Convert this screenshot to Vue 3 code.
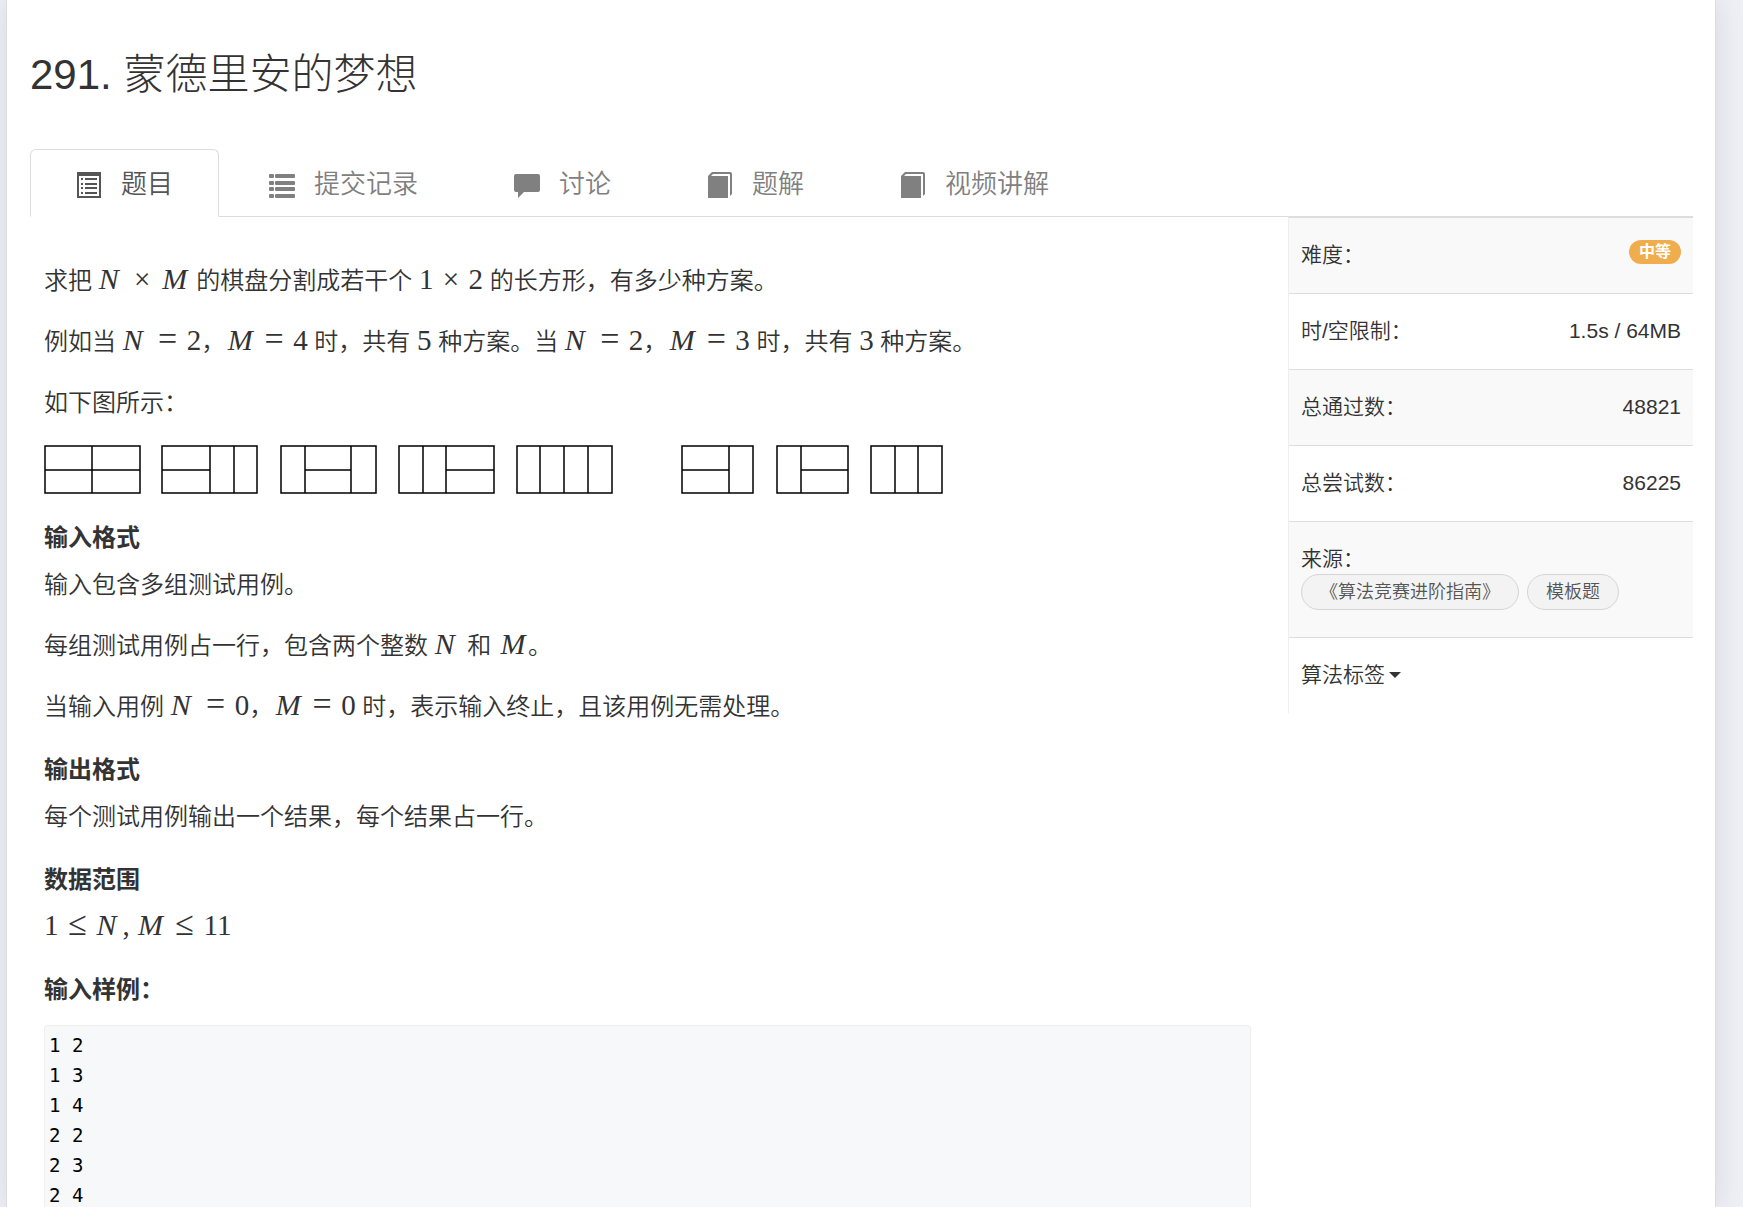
<script setup>
const tabs = [
  { label: '题目', icon: 'listAlt', active: true },
  { label: '提交记录', icon: 'list' },
  { label: '讨论', icon: 'comment' },
  { label: '题解', icon: 'book' },
  { label: '视频讲解', icon: 'book' },
]

const stats = [
  { label: '时/空限制：', value: '1.5s / 64MB' },
  { label: '总通过数：', value: '48821' },
  { label: '总尝试数：', value: '86225' },
]

const tags = ['《算法竞赛进阶指南》', '模板题']

const sample = ['1 2', '1 3', '1 4', '2 2', '2 3', '2 4'].join('\n')

// Each board: left edge, width, and the inner dividing lines
const boards = [
  { x: 1, w: 95, d: 'M48 1V48M1 25H96' },
  { x: 118, w: 95, d: 'M166 1V48M190 1V48M118 25H166' },
  { x: 237, w: 95, d: 'M261 1V48M307 1V48M261 25H307' },
  { x: 355, w: 95, d: 'M379 1V48M402 1V48M402 25H450' },
  { x: 473, w: 95, d: 'M496 1V48M520 1V48M544 1V48' },
  { x: 638, w: 71, d: 'M685 1V48M638 25H685' },
  { x: 733, w: 71, d: 'M757 1V48M757 25H804' },
  { x: 827, w: 71, d: 'M851 1V48M874 1V48' },
]
</script>

<template>
  <main class="card">
    <h1 class="title">291. 蒙德里安的梦想</h1>

    <nav class="tabs">
      <a v-for="tab in tabs" :key="tab.label" href="#" class="tab" :class="{ active: tab.active }">
        <svg class="icon" viewBox="0 0 26 30" aria-hidden="true">
          <path
            v-if="tab.icon === 'listAlt'"
            fill-rule="evenodd"
            d="M1 2H25V28H1ZM3 6V26H23V6ZM5 8H7V10H5ZM9 8H21V10H9ZM5 13H7V15H5ZM9 13H21V15H9ZM5 17H7V19H5ZM9 17H21V19H9ZM5 22H7V24H5ZM9 22H21V24H9Z"
          />
          <g v-else-if="tab.icon === 'list'">
            <template v-for="y in [4, 11, 17, 24]" :key="y">
              <rect x="0" :y="y" width="5" height="4" rx="1" />
              <rect x="6" :y="y" width="20" height="4" rx="1" />
            </template>
          </g>
          <path
            v-else-if="tab.icon === 'comment'"
            d="M2 4H24Q26 4 26 6V20Q26 22 24 22H10L4 28V22H2Q0 22 0 20V6Q0 4 2 4Z"
          />
          <path
            v-else
            d="M5 2H23Q25 2 25 4V24L23 26V4H6L4 6H21V28H1V6Z"
          />
        </svg>
        <span>{{ tab.label }}</span>
      </a>
    </nav>

    <div class="columns">
      <article class="content">
        <p>求把 <span class="math"><i class="n">N</i><span class="times">×</span><i class="m">M</i></span> 的棋盘分割成若干个 <span class="math">1<span class="times">×</span>2</span> 的长方形，有多少种方案。</p>
        <p>例如当 <span class="math"><i class="n">N</i><span class="rel">=</span>2</span>，<span class="math"><i class="m">M</i><span class="rel">=</span>4</span> 时，共有 <span class="math">5</span> 种方案。当 <span class="math"><i class="n">N</i><span class="rel">=</span>2</span>，<span class="math"><i class="m">M</i><span class="rel">=</span>3</span> 时，共有 <span class="math">3</span> 种方案。</p>
        <p>如下图所示：</p>
        <svg class="boards" viewBox="0 0 900 48" role="img" aria-label="棋盘分割方案">
          <g v-for="b in boards" :key="b.x">
            <rect :x="b.x" y="1" :width="b.w" height="47" />
            <path :d="b.d" />
          </g>
        </svg>

        <h2>输入格式</h2>
        <p>输入包含多组测试用例。</p>
        <p>每组测试用例占一行，包含两个整数 <span class="math"><i class="n">N</i></span> 和 <span class="math"><i class="m">M</i></span>。</p>
        <p>当输入用例 <span class="math"><i class="n">N</i><span class="rel">=</span>0</span>，<span class="math"><i class="m">M</i><span class="rel">=</span>0</span> 时，表示输入终止，且该用例无需处理。</p>

        <h2>输出格式</h2>
        <p>每个测试用例输出一个结果，每个结果占一行。</p>

        <h2>数据范围</h2>
        <p><span class="math">1<span class="rel">≤</span><i class="n">N</i><span class="comma">,</span><i class="m">M</i><span class="rel">≤</span>11</span></p>

        <h2>输入样例：</h2>
        <pre><code>{{ sample }}</code></pre>
      </article>

      <aside class="side">
        <table>
          <tbody>
            <tr>
              <th scope="row">难度：</th>
              <td><span class="badge">中等</span></td>
            </tr>
            <tr v-for="s in stats" :key="s.label">
              <th scope="row">{{ s.label }}</th>
              <td>{{ s.value }}</td>
            </tr>
            <tr>
              <td colspan="2" class="wide">
                <div>来源：</div>
                <div class="tags">
                  <a v-for="t in tags" :key="t" href="#" class="tag">{{ t }}</a>
                </div>
              </td>
            </tr>
            <tr>
              <td colspan="2" class="wide">
                <button type="button" class="toggle">算法标签<span class="caret"></span></button>
              </td>
            </tr>
          </tbody>
        </table>
      </aside>
    </div>
  </main>
</template>

<style>
body {
  margin: 0;
  background: #eff0f5;
}
</style>

<style scoped>
.card {
  box-sizing: border-box;
  margin: 0 27px 0 6px;
  padding: 48px 22px 0 23px;
  min-height: 100vh;
  background: #fff;
  border: solid #ddd;
  border-width: 0 1px;
  box-shadow: 0 0 30px rgba(0, 0, 0, 0.1);
  color: #333;
  font-family: 'Liberation Sans', 'Noto Sans CJK SC', sans-serif;
  font-size: 24px;
  font-weight: 350;
}

.title {
  margin: 0;
  font-size: 42px;
  font-weight: 300;
  line-height: 54px;
}

.tabs {
  display: flex;
  gap: 4px;
  margin-top: 47px;
  border-bottom: 1px solid #ddd;
}

.tab {
  display: flex;
  align-items: center;
  gap: 19px;
  margin-bottom: -1px;
  padding: 16px 45px 13px;
  border: 1px solid transparent;
  border-radius: 6px 6px 0 0;
  color: #808080;
  font-size: 26px;
  line-height: 37px;
  text-decoration: none;
}

.tab.active {
  background: #fff;
  border-color: #ddd #ddd #fff;
  color: #555;
}

.icon {
  width: 26px;
  height: 30px;
  fill: currentColor;
}

.columns {
  display: flex;
  align-items: flex-start;
}

.content {
  flex: 1;
  min-width: 0;
  padding: 45px 37px 0 14px;
}

.content p {
  margin: 0 0 24px;
  line-height: 37px;
}

.content h2 {
  margin: 26px 0 10px;
  font-size: 24px;
  font-weight: 700;
  line-height: 37px;
}

.boards {
  display: block;
  width: 900px;
  max-width: 100%;
  overflow: visible;
  fill: none;
  stroke: #000;
  stroke-width: 1.5;
}

.math {
  font-family: 'Liberation Serif', serif;
  font-size: 29px;
  line-height: 1;
  white-space: nowrap;
}

.n,
.m,
.times,
.rel,
.comma {
  display: inline-block;
  text-align: center;
}

.n,
.m {
  font-size: 30px;
}

.n {
  width: 26px;
  text-align: left;
}

.m {
  width: 30px;
}

.times {
  width: 35px;
}

.rel {
  width: 38px;
  font-size: 34px;
  line-height: 24px;
}

.comma {
  width: 13px;
  text-align: left;
}

.content pre {
  margin: 17px 0 0;
  padding: 4px 4px 0;
  background: #f6f8fa;
  border: 1px solid #eee;
  border-bottom: 0;
  border-radius: 4px 4px 0 0;
  color: #000;
  font-size: 19px;
  line-height: 30px;
}

code {
  font-family: 'DejaVu Sans Mono', monospace;
}

.side {
  flex: 0 0 405px;
  box-sizing: border-box;
  border-left: 1px solid #eee;
  font-size: 21px;
  line-height: 31px;
}

table {
  width: 100%;
  border-collapse: separate;
  border-spacing: 0;
}

th,
td {
  padding: 21px 12px 23px;
  border-top: 1px solid #ddd;
  font-weight: inherit;
  text-align: left;
  vertical-align: top;
}

td {
  text-align: right;
}

.wide {
  text-align: left;
}

tr:nth-child(odd) {
  background: #f9f9f9;
}

.badge {
  display: block;
  width: fit-content;
  margin: 1px 0 0 auto;
  padding: 0 10px;
  border-radius: 12px;
  background: #f0ad4e;
  color: #fff;
  font-size: 16px;
  font-weight: 700;
  line-height: 24px;
}

.tags {
  display: flex;
  gap: 8px;
  margin-bottom: 4px;
}

.tag {
  padding: 0 18px;
  border: 1px solid #d5d5d5;
  border-radius: 18px;
  background: #f3f3f3;
  color: #555;
  font-size: 18px;
  line-height: 34px;
  text-decoration: none;
}

.toggle {
  display: flex;
  align-items: center;
  gap: 4px;
  padding: 0;
  border: 0;
  background: none;
  color: inherit;
  font: inherit;
}

.caret {
  border: 6px solid transparent;
  border-top-color: currentColor;
  border-bottom: 0;
}
</style>
